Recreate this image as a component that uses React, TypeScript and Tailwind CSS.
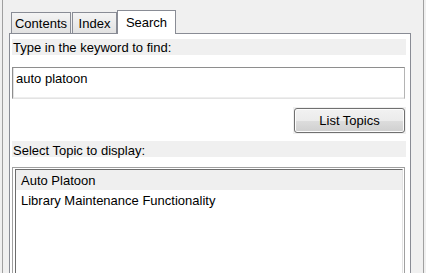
const topics = ["Auto Platoon", "Library Maintenance Functionality"];

const font = "font-['Liberation_Sans',Arial,sans-serif] text-[13px] text-black";

export default function App() {
  return (
    <div className={`flex h-[273px] w-[426px] overflow-hidden bg-[#f0f0f0] ${font}`}>
      {/* window edge */}
      <div className="ml-[2px] w-px shrink-0 bg-[#a0a0a0]" />

      <div className="ml-[6px] flex w-[402px] shrink-0 flex-col pt-[10px]">
        {/* tabs */}
        <div className="flex h-[23px] shrink-0 items-end pl-[2px]">
          <div className="flex h-[21px] w-[60px] items-center justify-center border border-b-0 border-[#898c95] bg-[linear-gradient(to_bottom,#f4f4f4,#e2e2e2)] pt-px leading-[15px]">
            Contents
          </div>
          <div className="ml-px flex h-[21px] w-[45px] items-center justify-center border border-b-0 border-[#898c95] bg-[linear-gradient(to_bottom,#f4f4f4,#e2e2e2)] pt-px leading-[15px]">
            Index
          </div>
          <div className="relative z-10 -mb-px flex h-[24px] w-[59px] items-center justify-center border border-b-0 border-[#898c95] bg-white pb-px leading-[15px]">
            Search
          </div>
        </div>

        {/* panel */}
        <div className="flex h-[260px] shrink-0 flex-col border border-[#898c95] bg-white">
          <div className="ml-[2px] mt-[5px] h-[16px] w-[394px] shrink-0 bg-[#f0f0f0] pl-px pt-px leading-[15px]">
            Type in the keyword to find:
          </div>

          <div className="ml-[2px] mt-[12px] h-[32px] w-[393px] shrink-0 border border-[#8e8e8e] border-b-[#e3e3e3] border-r-[#b4b4b4] pl-[3px] pt-[3px] leading-[15px] shadow-[inset_1px_0_0_#e3e3e3,inset_0_-1px_0_#eeeeee]">
            auto platoon
          </div>

          <div className="mr-[4px] mt-[8px] flex shrink-0 self-end bg-[#f0f0f0] p-px">
            <button className="flex h-[25px] w-[111px] items-center justify-center rounded-[3px] border border-[#707070] bg-[linear-gradient(to_bottom,#f2f2f2_0%,#ebebeb_50%,#dddddd_51%,#cfcfcf_100%)] leading-[15px] shadow-[inset_0_0_0_1px_#fcfcfc]">
              List Topics
            </button>
          </div>

          <div className="ml-[2px] mt-[7px] h-[16px] w-[394px] shrink-0 bg-[#f0f0f0] pl-px pt-[2px] leading-[15px]">
            Select Topic to display:
          </div>

          <div className="ml-[2px] mt-[10px] h-[140px] w-[393px] shrink-0 border border-[#a0a0a0] bg-white pl-[2px] pr-px pt-px">
            <div className="h-full border-l border-t border-r border-[#6d6d6d] border-r-[#e3e3e3]">
              {topics.map((t, i) => (
                <div
                  key={t}
                  className={`h-[20px] pl-[5px] pt-[2px] leading-[18px] ${i === 0 ? "bg-[#efefef]" : ""}`}
                >
                  {t}
                </div>
              ))}
            </div>
          </div>
        </div>
      </div>

      {/* window edge */}
      <div className="ml-[12px] w-px shrink-0 bg-[#a0a0a0]" />
    </div>
  );
}
